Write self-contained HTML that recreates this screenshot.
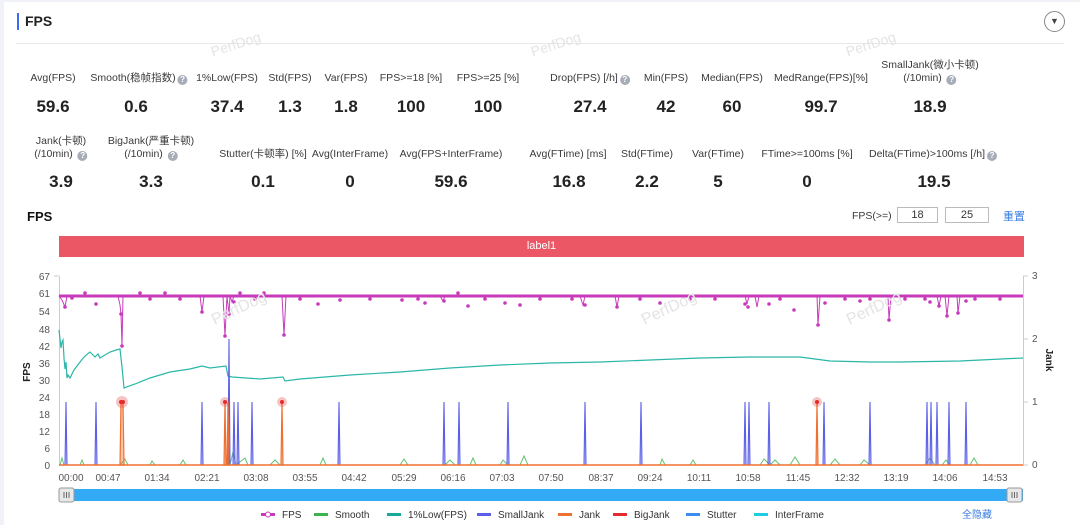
<!DOCTYPE html>
<html><head><meta charset="utf-8"><style>
*{margin:0;padding:0;box-sizing:border-box}
body{width:1080px;height:525px;background:#f0f2f7;font-family:"Liberation Sans","Noto Sans CJK SC",sans-serif;overflow:hidden;position:relative}
.card{position:absolute;left:4px;top:2px;width:1076px;height:523px;background:#fff}
.a{position:absolute;white-space:nowrap}
.c{transform:translateX(-50%);text-align:center}
.l{font-size:10.5px;color:#3a3a3a;line-height:13px}
.v{font-size:17px;font-weight:bold;color:#222}
.q{display:inline-block;width:10px;height:10px;border-radius:50%;background:#a7adb8;color:#fff;font-size:8px;line-height:10px;text-align:center;font-weight:bold;vertical-align:-1px;margin-left:2px}
.wm{position:absolute;color:#e4e4e4;font-size:14px;transform:rotate(-18deg)}
.tk{font-size:10px;fill:#555}
</style></head><body>
<div class="card"></div>
<div class="a" style="left:17px;top:13px;width:2px;height:17px;background:#3b6cf6"></div>
<div class="a" style="left:25px;top:13px;font-size:14px;font-weight:bold;color:#222">FPS</div>
<div class="a" style="left:16px;top:43px;width:1048px;height:1px;background:#e6e8ec"></div>
<div class="a" style="left:1044px;top:11px;width:21px;height:21px;border:1px solid #888;border-radius:50%;text-align:center;font-size:9px;line-height:19px;color:#444">▼</div>
<div class="wm" style="left:210px;top:36px">PerfDog</div>
<div class="wm" style="left:530px;top:36px">PerfDog</div>
<div class="wm" style="left:845px;top:36px">PerfDog</div>

<div class="a c l" style="left:53px;top:72px">Avg(FPS)</div><div class="a c v" style="left:53px;top:97px">59.6</div>
<div class="a c l" style="left:139px;top:72px">Smooth(稳帧指数)<span class="q">?</span></div><div class="a c v" style="left:136px;top:97px">0.6</div>
<div class="a c l" style="left:227px;top:72px">1%Low(FPS)</div><div class="a c v" style="left:227px;top:97px">37.4</div>
<div class="a c l" style="left:290px;top:72px">Std(FPS)</div><div class="a c v" style="left:290px;top:97px">1.3</div>
<div class="a c l" style="left:346px;top:72px">Var(FPS)</div><div class="a c v" style="left:346px;top:97px">1.8</div>
<div class="a c l" style="left:411px;top:72px">FPS&gt;=18 [%]</div><div class="a c v" style="left:411px;top:97px">100</div>
<div class="a c l" style="left:488px;top:72px">FPS&gt;=25 [%]</div><div class="a c v" style="left:488px;top:97px">100</div>
<div class="a c l" style="left:590px;top:72px">Drop(FPS) [/h]<span class="q">?</span></div><div class="a c v" style="left:590px;top:97px">27.4</div>
<div class="a c l" style="left:666px;top:72px">Min(FPS)</div><div class="a c v" style="left:666px;top:97px">42</div>
<div class="a c l" style="left:732px;top:72px">Median(FPS)</div><div class="a c v" style="left:732px;top:97px">60</div>
<div class="a c l" style="left:821px;top:72px">MedRange(FPS)[%]</div><div class="a c v" style="left:821px;top:97px">99.7</div>
<div class="a c l" style="left:930px;top:59px">SmallJank(微小卡顿)<br>(/10min) <span class="q">?</span></div><div class="a c v" style="left:930px;top:97px">18.9</div>
<div class="a c l" style="left:61px;top:135px">Jank(卡顿)<br>(/10min) <span class="q">?</span></div><div class="a c v" style="left:61px;top:172px">3.9</div>
<div class="a c l" style="left:151px;top:135px">BigJank(严重卡顿)<br>(/10min) <span class="q">?</span></div><div class="a c v" style="left:151px;top:172px">3.3</div>
<div class="a c l" style="left:263px;top:148px">Stutter(卡顿率) [%]</div><div class="a c v" style="left:263px;top:172px">0.1</div>
<div class="a c l" style="left:350px;top:148px">Avg(InterFrame)</div><div class="a c v" style="left:350px;top:172px">0</div>
<div class="a c l" style="left:451px;top:148px">Avg(FPS+InterFrame)</div><div class="a c v" style="left:451px;top:172px">59.6</div>
<div class="a c l" style="left:568px;top:148px">Avg(FTime) [ms]</div><div class="a c v" style="left:569px;top:172px">16.8</div>
<div class="a c l" style="left:647px;top:148px">Std(FTime)</div><div class="a c v" style="left:647px;top:172px">2.2</div>
<div class="a c l" style="left:718px;top:148px">Var(FTime)</div><div class="a c v" style="left:718px;top:172px">5</div>
<div class="a c l" style="left:807px;top:148px">FTime&gt;=100ms [%]</div><div class="a c v" style="left:807px;top:172px">0</div>
<div class="a c l" style="left:933px;top:148px">Delta(FTime)&gt;100ms [/h]<span class="q">?</span></div><div class="a c v" style="left:934px;top:172px">19.5</div>

<div class="a" style="left:27px;top:209px;font-size:13px;font-weight:bold;color:#111">FPS</div>
<div class="a l" style="left:852px;top:210px">FPS(&gt;=)</div>
<div class="a" style="left:897px;top:207px;width:41px;height:16px;border:1px solid #bbb;font-size:11px;text-align:center;line-height:14px;color:#333">18</div>
<div class="a" style="left:945px;top:207px;width:44px;height:16px;border:1px solid #bbb;font-size:11px;text-align:center;line-height:14px;color:#333">25</div>
<div class="a" style="left:1003px;top:208px;font-size:11px;color:#3b7de0">重置</div>
<div class="a" style="left:59px;top:236px;width:965px;height:21px;background:#ec5766;color:#fff;font-size:11px;text-align:center;line-height:21px">label1</div>

<svg class="a" style="left:0;top:0" width="1080" height="525">
<line x1="59.5" y1="276" x2="59.5" y2="466" stroke="#ccc"/>
<line x1="1023.5" y1="276" x2="1023.5" y2="466" stroke="#ccc"/>
<g class="tk" text-anchor="end">
<text x="50" y="280">67</text><text x="50" y="297">61</text><text x="50" y="315">54</text><text x="50" y="333">48</text><text x="50" y="350">42</text><text x="50" y="367">36</text><text x="50" y="384">30</text><text x="50" y="401">24</text><text x="50" y="418">18</text><text x="50" y="435">12</text><text x="50" y="452">6</text><text x="50" y="469">0</text>
</g>
<g stroke="#ccc"><line x1="54" y1="276" x2="59" y2="276"/><line x1="1023" y1="276" x2="1028" y2="276"/><line x1="1023" y1="339" x2="1028" y2="339"/><line x1="1023" y1="402" x2="1028" y2="402"/><line x1="1023" y1="465" x2="1028" y2="465"/></g>
<g class="tk"><text x="1032" y="279">3</text><text x="1032" y="342">2</text><text x="1032" y="405">1</text><text x="1032" y="468">0</text></g>
<text x="30" y="372" transform="rotate(-90 30 372)" font-size="10" font-weight="bold" text-anchor="middle" fill="#222">FPS</text>
<text x="1046" y="360" transform="rotate(90 1046 360)" font-size="10" font-weight="bold" text-anchor="middle" fill="#222">Jank</text>
<g class="tk" text-anchor="middle">
<text x="71" y="481">00:00</text><text x="108" y="481">00:47</text><text x="157" y="481">01:34</text><text x="207" y="481">02:21</text><text x="256" y="481">03:08</text><text x="305" y="481">03:55</text><text x="354" y="481">04:42</text><text x="404" y="481">05:29</text><text x="453" y="481">06:16</text><text x="502" y="481">07:03</text><text x="551" y="481">07:50</text><text x="601" y="481">08:37</text><text x="650" y="481">09:24</text><text x="699" y="481">10:11</text><text x="748" y="481">10:58</text><text x="798" y="481">11:45</text><text x="847" y="481">12:32</text><text x="896" y="481">13:19</text><text x="945" y="481">14:06</text><text x="995" y="481">14:53</text>
</g>
<g stroke="#ccc"><line x1="59" y1="465" x2="1023" y2="465"/></g>
<polyline fill="none" stroke="#3cb44b" stroke-width="1" opacity="0.8" points="60,465 62,458 64,465 80,465 82,460 84,465 120,465 125,459 128,465 150,465 152,461 155,465 180,465 183,460 186,465 230,465 233,452 236,465 245,458 248,465 270,465 275,460 280,465 320,465 323,458 326,465 400,465 404,459 408,465 445,465 450,460 455,465 470,465 473,458 476,465 500,465 503,460 508,465 520,465 524,456 528,465 660,465 662,459 665,465 690,465 693,460 696,465 760,465 764,459 770,465 775,460 780,465 790,465 795,457 800,465 830,465 835,459 840,465 860,465 864,460 870,465 925,465 930,458 935,465 942,465 946,460 950,465 970,465 974,458 978,465 1023,465"/>
<polyline fill="none" stroke="#2ab7a9" stroke-width="1.2" points="59,330 61,348 62,342 63,340 64,358 65,369 66,362 67,378 68,375 70,378 74,370 80,362 85,356 90,352 95,357 98,354 100,358 105,355 110,352 116,350 120,349 122,367 124,388 135,384 150,378 170,372 190,369 202,366 210,368 226,366 228,376 232,377 260,379 283,377 285,381 300,379 350,375 400,372 450,368 500,365 550,363 600,362 650,360 700,358 750,357 800,357 830,361 870,362 900,362 960,361 1023,358"/>
<g stroke="#5a5ee8" stroke-width="1.1" fill="rgba(90,94,232,0.3)">
<path d="M65,465 L66,402 L67,465Z M95,465 L96,402 L97,465Z M201,465 L202,402 L203,465Z M228,465 L229,339 L230,465Z M233,465 L234,402 L235,465Z M237,465 L238,402 L239,465Z M251,465 L252,402 L253,465Z M338,465 L339,402 L340,465Z M443,465 L444,402 L445,465Z M458,465 L459,402 L460,465Z M507,465 L508,402 L509,465Z M584,465 L585,402 L586,465Z M640,465 L641,402 L642,465Z M744,465 L745,402 L746,465Z M748,465 L749,402 L750,465Z M768,465 L769,402 L770,465Z M823,465 L824,402 L825,465Z M869,465 L870,402 L871,465Z M926,465 L927,402 L928,465Z M930,465 L931,402 L932,465Z M936,465 L937,402 L938,465Z M948,465 L949,402 L950,465Z M965,465 L966,402 L967,465Z"/>
</g>
<g stroke="#f07030" stroke-width="1.2" fill="rgba(240,112,48,0.4)">
<path d="M120,465 L121,402 L123,402 L124,465Z M224,465 L225,402 L226,465Z M227,465 L228,402 L229,465Z M281,465 L282,402 L283,465Z M816,465 L817,402 L818,465Z"/>
</g>
<g fill="rgba(230,60,60,0.3)"><circle cx="122" cy="402" r="6"/><circle cx="225" cy="402" r="5"/><circle cx="282" cy="402" r="5"/><circle cx="817" cy="402" r="5"/></g>
<g fill="#e52b2b"><circle cx="121" cy="402" r="2"/><circle cx="123" cy="402" r="2"/><circle cx="225" cy="402" r="2"/><circle cx="282" cy="402" r="2"/><circle cx="817" cy="402" r="2"/></g>
<line x1="59" y1="465" x2="1023" y2="465" stroke="#f07030" stroke-width="1.5"/>
<polyline fill="none" stroke="#c73bbb" stroke-width="1" points="59,296 62,300 65,307 67,296 118,296 120,305 121,314 122,346 123,296 200,296 202,312 204,296 223,296 225,336 227,296 229,314 230,296 232,302 234,296 282,296 284,335 286,296 440,296 443,301 445,296 580,296 583,305 585,296 615,296 617,307 619,296 745,296 747,304 749,296 755,296 757,307 759,296 817,296 818,325 820,296 888,296 889,320 891,296 937,296 939,306 941,296 945,296 947,316 949,296 957,296 958,313 960,296 1023,296"/>
<line x1="59" y1="296" x2="1023" y2="296" stroke="#c73bbb" stroke-width="3"/>
<g fill="#c73bbb">
<circle cx="65" cy="307" r="1.8"/><circle cx="72" cy="298" r="1.8"/><circle cx="85" cy="293" r="1.8"/><circle cx="96" cy="304" r="1.8"/><circle cx="121" cy="314" r="1.8"/><circle cx="122" cy="346" r="1.8"/><circle cx="140" cy="293" r="1.8"/><circle cx="150" cy="299" r="1.8"/><circle cx="165" cy="293" r="1.8"/><circle cx="180" cy="299" r="1.8"/><circle cx="202" cy="312" r="1.8"/><circle cx="225" cy="336" r="1.8"/><circle cx="229" cy="314" r="1.8"/><circle cx="234" cy="302" r="1.8"/><circle cx="240" cy="293" r="1.8"/><circle cx="255" cy="299" r="1.8"/><circle cx="264" cy="293" r="1.8"/><circle cx="284" cy="335" r="1.8"/><circle cx="300" cy="299" r="1.8"/><circle cx="318" cy="304" r="1.8"/><circle cx="340" cy="300" r="1.8"/><circle cx="370" cy="299" r="1.8"/><circle cx="402" cy="300" r="1.8"/><circle cx="418" cy="299" r="1.8"/><circle cx="425" cy="303" r="1.8"/><circle cx="444" cy="301" r="1.8"/><circle cx="458" cy="293" r="1.8"/><circle cx="468" cy="306" r="1.8"/><circle cx="485" cy="299" r="1.8"/><circle cx="505" cy="303" r="1.8"/><circle cx="520" cy="305" r="1.8"/><circle cx="540" cy="299" r="1.8"/><circle cx="572" cy="299" r="1.8"/><circle cx="585" cy="305" r="1.8"/><circle cx="617" cy="307" r="1.8"/><circle cx="640" cy="299" r="1.8"/><circle cx="660" cy="303" r="1.8"/><circle cx="690" cy="299" r="1.8"/><circle cx="715" cy="299" r="1.8"/><circle cx="745" cy="304" r="1.8"/><circle cx="748" cy="307" r="1.8"/><circle cx="769" cy="304" r="1.8"/><circle cx="780" cy="299" r="1.8"/><circle cx="794" cy="310" r="1.8"/><circle cx="818" cy="325" r="1.8"/><circle cx="825" cy="303" r="1.8"/><circle cx="845" cy="299" r="1.8"/><circle cx="860" cy="301" r="1.8"/><circle cx="870" cy="299" r="1.8"/><circle cx="889" cy="320" r="1.8"/><circle cx="905" cy="299" r="1.8"/><circle cx="925" cy="299" r="1.8"/><circle cx="930" cy="302" r="1.8"/><circle cx="939" cy="306" r="1.8"/><circle cx="947" cy="316" r="1.8"/><circle cx="958" cy="313" r="1.8"/><circle cx="966" cy="301" r="1.8"/><circle cx="975" cy="299" r="1.8"/><circle cx="1000" cy="299" r="1.8"/>
</g>
<rect x="59" y="489" width="964" height="12" fill="#33aaf5"/>
<rect x="59" y="488" width="15" height="14" rx="2" fill="#e8e8e8" stroke="#999"/>
<rect x="1007" y="488" width="15" height="14" rx="2" fill="#e8e8e8" stroke="#999"/>
<g stroke="#666"><line x1="64" y1="492" x2="64" y2="498"/><line x1="66.5" y1="492" x2="66.5" y2="498"/><line x1="69" y1="492" x2="69" y2="498"/><line x1="1012" y1="492" x2="1012" y2="498"/><line x1="1014.5" y1="492" x2="1014.5" y2="498"/><line x1="1017" y1="492" x2="1017" y2="498"/></g>
<g font-size="10" fill="#333">
<rect x="261" y="513" width="14" height="3" fill="#c73bbb"/><circle cx="268" cy="514.5" r="2.5" fill="#fff" stroke="#c73bbb"/><text x="282" y="518">FPS</text>
<rect x="314" y="513" width="14" height="3" fill="#3cb44b"/><text x="335" y="518">Smooth</text>
<rect x="387" y="513" width="14" height="3" fill="#1aa89a"/><text x="408" y="518">1%Low(FPS)</text>
<rect x="477" y="513" width="14" height="3" fill="#5a5ee8"/><text x="498" y="518">SmallJank</text>
<rect x="558" y="513" width="14" height="3" fill="#f07030"/><text x="579" y="518">Jank</text>
<rect x="613" y="513" width="14" height="3" fill="#e52b2b"/><text x="634" y="518">BigJank</text>
<rect x="686" y="513" width="14" height="3" fill="#3b8ef0"/><text x="707" y="518">Stutter</text>
<rect x="754" y="513" width="14" height="3" fill="#1ccfe0"/><text x="775" y="518">InterFrame</text>
<text x="962" y="518" fill="#3b7de0">全隐藏</text>
</g>
</svg>
<div class="wm" style="left:640px;top:300px;font-size:16px;transform:rotate(-25deg)">PerfDog</div>
<div class="wm" style="left:845px;top:300px;font-size:16px;transform:rotate(-25deg)">PerfDog</div>
<div class="wm" style="left:210px;top:300px;font-size:16px;transform:rotate(-25deg)">PerfDog</div>
</body></html>
